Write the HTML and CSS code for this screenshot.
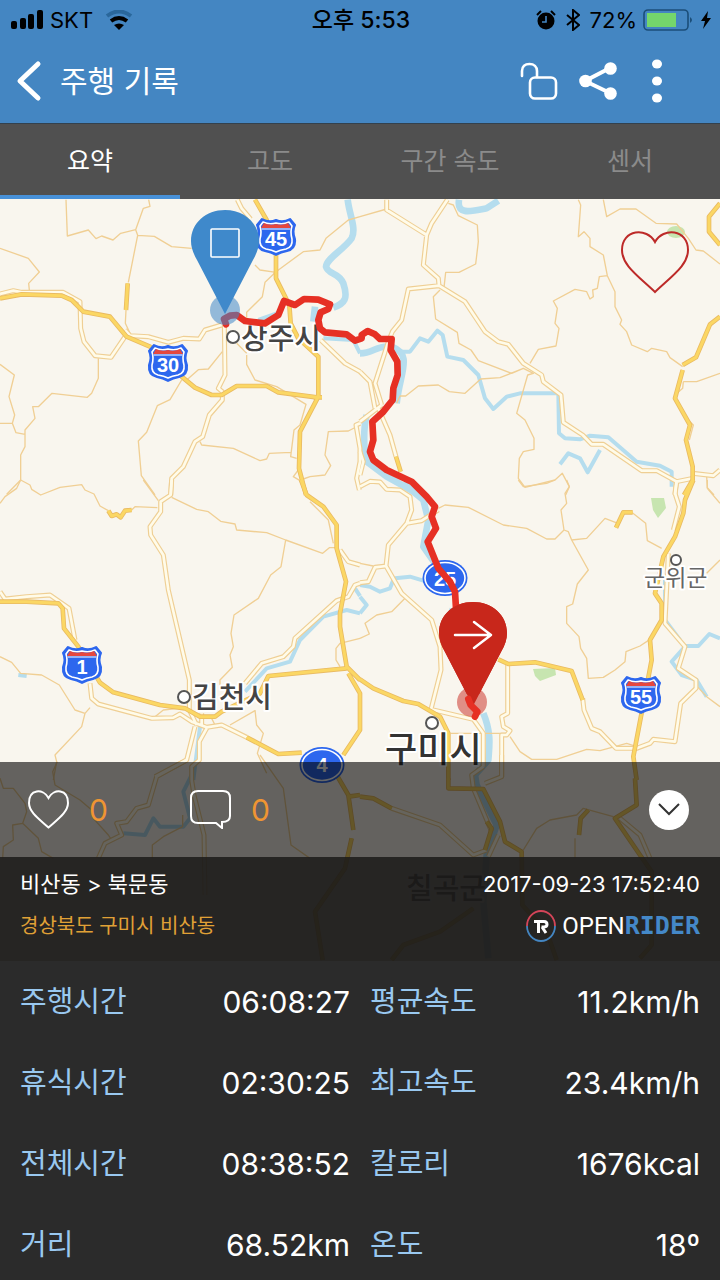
FILE: index.html
```html
<!DOCTYPE html>
<html lang="ko">
<head>
<meta charset="utf-8">
<meta name="viewport" content="width=device-width, initial-scale=1">
<title>주행 기록</title>
<link rel="stylesheet" href="styles.css">
</head>
<body>
<div class="app">
  <div class="status">
    <div class="status-side">
      <svg width="34" height="20" viewBox="0 0 34 20" aria-hidden="true"><rect x="1" y="11" width="6" height="8" rx="2"/><rect x="10" y="8" width="6" height="11" rx="2"/><rect x="18" y="4" width="6" height="15" rx="2"/><rect x="27" y="0" width="6" height="19" rx="2"/></svg>
      <span class="carrier">SKT</span>
      <svg width="28" height="20" viewBox="0 0 28 20" aria-hidden="true" fill="none"><path d="M2 6Q14-3 26 6" stroke="#2a679b" stroke-width="4"/><path d="M6 11Q14 5 22 11" stroke="#000" stroke-width="4"/><path d="M9 15Q14 12 19 15L14 20Z" fill="#000"/></svg>
    </div>
    <div class="clock">오후 5:53</div>
    <div class="status-side status-end">
      <svg width="20" height="20" viewBox="0 0 20 20" aria-hidden="true"><circle cx="10" cy="11" r="8.5"/><path d="M1 5L5 1M19 5L15 1" stroke="#000" stroke-width="2"/><path d="M10 6V12H6" fill="none" stroke="#4486c2" stroke-width="1.6"/></svg>
      <svg class="bluetooth" width="14" height="22" viewBox="0 0 14 22" aria-hidden="true"><path d="M1 6L13 16L7 21V1L13 6L1 16" fill="none" stroke="#000" stroke-width="2"/></svg>
      <span>72%</span>
      <svg width="51" height="22" viewBox="0 0 51 22" aria-hidden="true"><rect x="1" y="1" width="44" height="20" rx="4" fill="none" stroke="#1b4e79" stroke-width="1.6"/><rect x="4" y="4" width="29" height="14" fill="#74d66c"/><path d="M47 8Q51 11 47 14Z" fill="#1b4e79"/></svg>
      <svg width="12" height="18" viewBox="0 0 12 18" aria-hidden="true"><path d="M8 0L1 10H5L3 18L11 7H7Z"/></svg>
    </div>
  </div>

  <header class="header">
    <button class="back" aria-label="뒤로"><svg width="26" height="42" viewBox="0 0 26 42"><path d="M22 4L4 21L22 38" fill="none" stroke="#fff" stroke-width="5" stroke-linecap="round" stroke-linejoin="round"/></svg></button>
    <h1 class="title">주행 기록</h1>
    <button class="action" aria-label="잠금 해제"><svg width="38" height="38" viewBox="0 0 38 38" fill="none" stroke="#fff" stroke-width="2.6" stroke-linecap="round"><path d="M2 14V9C2 4 5 2 9.500 2C14 2 17 5 17 9V15"/><rect x="10" y="15.500" width="26" height="21" rx="5"/></svg></button>
    <button class="action" aria-label="공유"><svg width="38" height="38" viewBox="0 0 38 38" fill="#fff"><path d="M31 6L6 19L31 31" fill="none" stroke="#fff" stroke-width="4"/><circle cx="6.500" cy="19" r="6.300"/><circle cx="31.500" cy="6.500" r="6.300"/><circle cx="31.500" cy="31.500" r="6.300"/></svg></button>
    <button class="action" aria-label="더보기"><svg width="12" height="44" viewBox="0 0 12 44" fill="#fff"><ellipse cx="6" cy="5" rx="5" ry="4.500"/><ellipse cx="6" cy="22" rx="5" ry="4.500"/><ellipse cx="6" cy="39" rx="5" ry="4.500"/></svg></button>
  </header>

  <nav class="tabs">
    <button class="tab tab-active">요약</button>
    <button class="tab">고도</button>
    <button class="tab">구간 속도</button>
    <button class="tab">센서</button>
  </nav>

  <main class="map-panel">
    <svg class="map" viewBox="0 0 720 762" preserveAspectRatio="xMidYMin slice" role="img" aria-label="주행 경로 지도">
      <defs>
        <g id="main-roads">
          <g transform="translate(0 -4) scale(.33333)"><path d="M0 297L40 287L65 292H190L240 320L242 400L252 440L285 482L333 487L375 425M375 405L390 422L445 425L505 442L550 430L598 432L615 405L665 390M673 390L675 540L655 580L667 590V615L628 660L608 725L585 740L550 815L515 850L512 900M712 14L725 40L752 72M962 435L1035 505L1080 530M1080 685L1068 690L1080 760V800L1070 850L1078 885"/></g>
          <g transform="translate(360 -4) scale(.33333)"><path d="M80 14V45L200 120M262 14L215 85L200 120L190 210L235 250L237 272L145 282L125 375L97 410L85 440L45 565L65 630M237 272L315 320L375 410L415 440L445 448L490 505L545 540L550 560L603 600L610 682L668 720L695 748H730L845 827H890L950 860L998 850M0 530L30 560L45 640M0 680L65 630M55 640L90 720L108 785M998 835L1060 842L1080 825M950 860L945 900M0 770L10 800L0 840"/></g>
          <g transform="translate(0 281) scale(.33333)"><path d="M515 0L512 45L482 65V95L450 140L452 165L490 225L505 330L568 600V690L590 735M0 335L15 357L80 350L150 345L207 385L225 480M270 610L275 655L295 672L455 715L520 713L540 702L575 725L620 742L665 735L740 772M1080 310L1065 315L1045 350L1010 362L885 475L880 500L850 530L785 550L735 610M605 700V735M585 740L560 840L465 890M620 745L598 785V840L575 860V900M1020 210L1045 245L1080 255"/></g>
          <g transform="translate(360 281) scale(.33333)"><path d="M0 20L30 4L60 6L80 28L120 30L150 50L155 90L140 130L85 195L78 258L125 340L215 420L240 500L243 570L213 688L340 718L370 760V860M140 130L185 122L235 90M0 308L25 305L45 262L78 258M443 550V700L425 710L430 740L450 752L440 765H425V890M668 655L672 690L695 745L720 755L768 805H830L870 790L880 778L945 785L962 670L1008 625V600L955 565L975 500L915 430L925 220M950 0L945 40L958 80L940 150"/></g>
          <g transform="translate(0 556) scale(.33333)"><path d="M560 15L470 65L445 150L410 160L380 200L350 205L365 240L315 265L295 310M575 75L582 120L612 240L615 420"/></g>
          <g transform="translate(360 556) scale(.33333)"><path d="M95 160L240 210L340 300L380 285M425 0V65L375 85M370 35L335 60L340 100L395 230M780 190L840 240L870 310M415 240L385 305"/></g>
        </g>
        <g id="highways">
          <g transform="translate(0 -4) scale(.33333)"><path d="M0 310L65 298L185 302L215 315L250 350L330 365L380 425L450 455L545 545L585 578L635 600H665L710 573H800L835 592L950 607M765 14L800 75L828 180V250L868 330L872 385L895 430L955 485V605L900 710L897 820L918 900M383 265L378 345M940 607H966"/></g>
          <g transform="translate(360 -4) scale(.33333)"><path d="M1080 25L1047 65V110L1080 150M1080 365L1050 388L1008 487L968 510M968 525L945 610L990 690L978 735L998 815V855L972 900M108 785L122 830"/></g>
          <g transform="translate(0 281) scale(.33333)"><path d="M903 0L920 45L970 80L1010 135V205L1038 305L1020 400V440L1040 560L1080 600M0 365H80L175 370L188 385L192 445L235 500L300 608L340 637L480 675L555 685L600 710H645L665 695L780 640L805 588L1040 565M740 772L835 822L905 818M1045 580L1080 640V750L1030 825M325 92L335 108L350 103L362 112L375 92L395 90"/></g>
          <g transform="translate(360 281) scale(.33333)"><path d="M1000 0L975 60L970 100L945 170L910 230L885 340L905 370V420L870 480L875 540L820 830L830 900M415 538L445 552L525 547L635 573L668 660M0 598L40 625L130 663L175 672L240 710L265 760V900M768 143L790 97H818"/></g>
          <g transform="translate(0 556) scale(.33333)"><path d="M1010 60L1045 120L1060 225M1080 120L1045 125M1055 250L1035 340L945 470L968 615"/></g>
          <g transform="translate(360 556) scale(.33333)"><path d="M0 125L40 130L95 160M265 70V100L370 102L420 200L435 260L485 290L487 450L560 530L590 615M825 70L830 150L765 190L840 300L875 350V570L840 610M685 165L662 190L657 240M340 460L240 530L130 570L95 615M380 200L395 220L375 285"/></g>
        </g>
        <g id="interstate">
          <path d="M-14-18Q-7-14 0-17Q7-14 14-18L19-12Q16-6 19 2Q20 12 11 14Q5 15 0 18Q-5 15-11 14Q-20 12-19 2Q-16-6-19-12Z" fill="#2d67ee" stroke="#2d67ee" stroke-width="2"/>
          <path d="M-13-15Q-7-12 0-14Q7-12 13-15L16-11Q14-5 16 2Q17 10 10 12Q4 13 0 15Q-4 13-10 12Q-17 10-16 2Q-14-5-16-11Z" fill="#2d67ee" stroke="#fff" stroke-width="1.600"/>
          <path d="M-15-9L-12-14Q-6-11 0-13Q6-11 12-14L15-9Z" fill="#e5473f"/>
          <path d="M-14-8H14" stroke="#fff" stroke-width="1"/>
        </g>
        <g id="oval">
          <ellipse rx="22.500" ry="18" fill="#2d67ee"/><ellipse rx="20" ry="15.500" fill="#2d67ee" stroke="#fff" stroke-width="1.600"/>
        </g>
        <path id="pin" d="M225 115L197 61C193 54 191 48 191 42C191 24 206 11 225 11C244 11 259 24 259 42C259 48 257 54 253 61Z"/>
      </defs>

      <rect class="land" width="720" height="762"/>

      <g class="parks">
        <ellipse cx="676" cy="33" rx="9" ry="6"/>
        <path d="M651 299H664L666 309L658 319L653 311ZM533 470L555 469L556 476L540 482L535 477Z"/>
      </g>

      <g class="rivers">
        <g transform="translate(0 -4) scale(.33333)"><path class="wide" d="M1043 14C1048 60 1070 100 1055 130C1030 165 980 190 978 215C985 240 1015 230 1030 265C1045 310 1035 325 1000 338M945 335L940 380"/><path d="M775 375L830 355M970 430L1060 435L1080 475"/></g>
        <g transform="translate(360 -4) scale(.33333)"><path class="wide" d="M297 14C290 60 330 50 380 40L415 17M0 475C40 475 50 450 90 455M95 455C160 480 120 530 110 625M20 660C10 700 10 760 20 800L80 845L180 900"/><path d="M120 470H150L180 430L205 440L232 407L248 420L262 485L310 495L355 540L375 610L400 642L440 605L480 595H595L597 715L615 730L660 733L690 722L745 727L830 800L900 812L935 830V875M600 808L625 775L660 790L683 832L720 765"/></g>
        <g transform="translate(0 281) scale(.33333)"><path d="M735 635L800 565L870 545L900 480L970 410L1040 390L1080 400M600 740L580 900M55 585L80 588M1065 325L1080 348"/></g>
        <g transform="translate(360 281) scale(.33333)"><path class="wide" d="M130 10L190 60L205 120L190 200L225 250M370 700C395 760 388 800 385 840L340 890"/><path d="M105 295L150 290L200 305M0 315L30 320L60 335L90 325L100 300M0 350L20 375L0 400M275 385L270 400M975 498H1015L1048 462L1080 475M975 500L935 545L965 585L1010 600L1040 650M915 300V420L960 480"/></g>
        <g transform="translate(0 556) scale(.33333)"><path d="M575 60L550 110L570 190L550 215H480L460 190L435 240L370 235"/></g>
        <g transform="translate(360 556) scale(.33333)"><path class="wide" d="M345 60L350 90L410 210L380 300L370 440L385 610"/></g>
      </g>

      <g class="local-roads">
        <g transform="translate(0 -4) scale(.33333)"><path d="M198 14L202 123L265 105L288 131L305 123L339 135L362 115L407 104L430 40L450 34L446 14M407 104L413 121L463 124L515 155L575 160M413 121L385 262M378 345L376 385L390 415M0 160L85 190L118 231L86 265L88 285M0 508L43 540L27 605L44 660L37 685H0M37 685L48 713L75 718M295 490V550L275 595L262 607L156 595L115 635H98L105 670L75 705V755L62 780V855L20 898M545 555L510 614L472 632L440 712L415 738L424 842L465 900M560 555L595 524L625 522L667 470M600 740L605 750L700 760L780 797L800 792L808 775L872 772M740 480V508L765 555L830 575L918 628L900 690L882 705L872 785L890 790M1080 65L1045 75L978 130L960 165L910 170L828 230L795 262L787 305L740 352V372M765 210L780 225L828 232M710 445L740 475M1080 690L1045 708L985 710L975 780L992 812L975 840L930 845L910 852M895 825L880 845L905 860"/></g>
        <g transform="translate(360 -4) scale(.33333)"><path d="M0 65L80 42M265 25L280 30L295 62L352 90L355 140L347 207L297 232H257L252 278M240 285L220 305L227 372L292 412L297 445L333 465L355 497L455 535L490 520M110 625L120 603H137L175 573L235 570L268 590L315 595L362 552L420 548L490 520L520 535L503 540L470 655L495 675L522 730V763L490 770L478 790L475 850L495 877L585 855L607 835L628 875L617 900M510 505L535 463L588 453L597 400L585 385L592 340L580 318L645 283L680 290L690 312L700 305L698 285L712 280L718 245L742 242M655 14L662 30L655 125L672 110L690 130V155L730 180L742 242L765 290V335L785 375L780 388L800 410L815 450L862 470L875 460L920 470L930 488L968 515M730 14L740 65L780 42H828L888 85L950 87L985 130L1008 165L1030 168L1080 207M970 560H1010L1080 535M1040 845L1042 878L1062 900M980 670L1000 690L988 735M970 560L968 580L945 600"/></g>
        <g transform="translate(0 281) scale(.33333)"><path d="M0 70L15 50L50 25L62 0L90 15L95 28L122 45L180 22L245 14L255 30L282 42L300 78L325 92M395 90L405 80L472 83M430 0L475 62M515 52L590 88L625 95L662 124L705 132L710 150L800 158L857 180L968 220L988 203H1010M857 180L843 260L812 285L775 355L702 405L693 460L700 500L690 525L697 562L660 600V625M0 530L35 547L62 580L125 585L178 615L225 690L255 700L270 683M255 700L245 740L165 825L170 845L160 900M1080 475L1020 490L1008 505V540L1020 560M765 690L770 735L790 760L772 820L800 880M690 735L765 692M930 65L985 120L1000 190M465 710L490 690L535 685M635 715L645 735"/></g>
        <g transform="translate(360 281) scale(.33333)"><path d="M235 85L255 75L325 82L430 135L500 145L560 177H585L612 150L603 90L620 70L615 40L628 20L620 0M475 0L490 20L560 10L585 0M612 150L625 155L635 180L685 270L652 312L638 372L620 380V430L657 470L662 505L680 535L685 595L730 592L765 570L795 545L798 515L840 498L870 478M635 180L680 175L735 115L768 128M815 97L857 130L862 182L905 205M0 250L40 258M0 475L28 462L15 430L50 405L95 395L135 355M1042 0V25L1080 70M1080 240L1040 280M450 770L480 815L515 838H590L680 808L720 812L800 790L830 800M272 760H440M1012 620L1040 650L1080 680"/></g>
        <g transform="translate(0 556) scale(.33333)"><path d="M172 20L158 50L165 90L240 135L275 165L280 190L325 240L335 255M0 70L10 100H40L75 145L80 170L68 205L115 250L125 290L160 310M68 205L38 210L40 255L10 275L8 310M780 0L850 100L873 270L930 310M548 180V215L490 245L457 270V310"/></g>
        <g transform="translate(360 556) scale(.33333)"><path d="M490 285L530 220L570 195L650 180L670 160L760 185M645 250V310"/></g>
      </g>

      <use href="#main-roads" class="main-casing"/>
      <use href="#main-roads" class="main-fill"/>
      <use href="#highways" class="highway-casing"/>
      <use href="#highways" class="highway-fill"/>

      <g class="shields">
        <use href="#interstate" x="276" y="38"/><text x="276" y="47">45</text>
        <use href="#interstate" x="168" y="164"/><text x="168" y="173">30</text>
        <use href="#interstate" x="82" y="466"/><text x="82" y="475">1</text>
        <use href="#interstate" x="641" y="496"/><text x="641" y="505">55</text>
        <use href="#oval" x="445" y="379"/><text x="445" y="387">25</text>
        <use href="#oval" x="322" y="566"/><text x="322" y="573">4</text>
      </g>

      <g class="towns">
        <circle cx="233" cy="138" r="6"/><circle cx="184" cy="498" r="6"/><circle cx="432" cy="524" r="6"/><circle cx="676" cy="361" r="5"/>
      </g>
      <g class="places">
        <text class="city" x="241" y="150">상주시</text>
        <text class="city" x="192" y="509">김천시</text>
        <text class="city" x="406" y="700">칠곡군</text>
        <text class="metro" x="385" y="563">구미시</text>
        <text class="county" x="644" y="387">군위군</text>
      </g>

      <circle cx="472" cy="503" r="15" fill="#c8261c" opacity=".5"/>
      <use href="#pin" x="248" y="392" fill="#c8271b"/>
      <g transform="translate(0 -4) scale(.33333)" class="route">
        <path d="M678 388L672 372L690 362L710 360L735 378L795 385L835 360L852 318L885 330L912 312L955 314L990 328L985 342L962 352L955 375L960 400L975 412L1040 418L1065 437L1085 430L1085 420L1103 408L1125 418L1140 432L1175 432L1172 465L1192 500L1193 540L1180 580L1178 615L1150 650L1117 680L1120 735L1110 770L1120 795L1160 825L1235 860L1280 905L1305 935L1295 965L1308 1000L1283 1040L1315 1120L1350 1160L1365 1190L1368 1240M1405 1512L1412 1530L1432 1550L1425 1565"/>
      </g>
      <use href="#pin" x="248" y="392" fill="#c8271b" clip-path="inset(0 0 12px 0)"/>
      <circle cx="225" cy="111" r="15" fill="#3f87c8" opacity=".55"/>
      <use href="#pin" fill="#3f89cb"/>
      <rect x="211" y="30" width="28" height="28" rx="1" fill="none" stroke="#fff" stroke-width="1.600"/>
      <path d="M455 436H491M474 423L491 436L474 449" fill="none" stroke="#fff" stroke-width="2.500" stroke-linecap="round"/>
    </svg>

    <button class="favorite" aria-label="즐겨찾기"><svg width="68" height="64" viewBox="0 0 68 64"><path d="M34 12C26-3 1-1 1 20C1 35 16 45 34 62C52 45 67 35 67 20C67-1 42-3 34 12Z" fill="none" stroke="#bd2a28" stroke-width="2"/></svg></button>

    <div class="social">
      <button class="reaction" aria-label="좋아요 0"><svg width="41" height="39" viewBox="0 0 41 39"><path d="M20.500 8C15-2 1-1 1 13C1 22 11 29 20.500 37.500C30 29 40 22 40 13C40-1 26-2 20.500 8Z" fill="none" stroke="#fff" stroke-width="2"/></svg><span>0</span></button>
      <button class="reaction" aria-label="댓글 0"><svg width="41" height="39" viewBox="0 0 41 39"><path d="M8 1H33Q40 1 40 8V26Q40 32 32 32V38L26 33H8Q1 33 1 26V8Q1 1 8 1Z" fill="none" stroke="#fff" stroke-width="2"/></svg><span>0</span></button>
      <button class="collapse" aria-label="접기"><svg width="22" height="13" viewBox="0 0 22 13"><path d="M1 1L11 11L21 1" fill="none" stroke="#333" stroke-width="2"/></svg></button>
    </div>

    <section class="ride">
      <div class="ride-line"><h2 class="ride-name">비산동 &gt; 북문동</h2><time class="ride-time">2017-09-23 17:52:40</time></div>
      <div class="ride-line">
        <span class="ride-place">경상북도 구미시 비산동</span>
        <div class="brand">
          <svg width="30" height="32" viewBox="0 0 30 32" aria-hidden="true" fill="none" stroke-width="1.800"><path d="M1 16A14 15 0 0 1 29 16" stroke="#d54559"/><path d="M29 16A14 15 0 0 1 1 16" stroke="#4486c2"/><path d="M8 11.500H18Q21 11.500 21 14.500Q21 17 17.500 17H15.500M12.500 11V23M16 17L20 23" stroke="#fff" stroke-width="3"/></svg>
          <span class="brand-name"><span class="brand-open">OPEN</span><span class="brand-rider">RIDER</span></span>
        </div>
      </div>
    </section>
  </main>

  <dl class="stats">
    <div class="stat"><dt>주행시간</dt><dd>06:08:27</dd></div>
    <div class="stat"><dt>평균속도</dt><dd>11.2km/h</dd></div>
    <div class="stat"><dt>휴식시간</dt><dd>02:30:25</dd></div>
    <div class="stat"><dt>최고속도</dt><dd>23.4km/h</dd></div>
    <div class="stat"><dt>전체시간</dt><dd>08:38:52</dd></div>
    <div class="stat"><dt>칼로리</dt><dd>1676kcal</dd></div>
    <div class="stat"><dt>거리</dt><dd>68.52km</dd></div>
    <div class="stat"><dt>온도</dt><dd>18º</dd></div>
  </dl>
</div>
</body>
</html>
```
FILE: styles.css
```css
* { box-sizing: border-box; }

body {
  margin: 0;
  background: #2b2b2b;
  color: #fff;
  font-family: Inter, "Noto Sans CJK KR", sans-serif;
}

h1, h2, dl, dd { margin: 0; font-weight: 400; }

button {
  display: flex;
  align-items: center;
  justify-content: center;
  padding: 0;
  border: 0;
  background: none;
  color: inherit;
  font: inherit;
  cursor: pointer;
}

svg { display: block; flex: none; }

.app {
  display: flex;
  flex-direction: column;
  min-height: 100vh;
}

.status {
  display: grid;
  grid-template-columns: 1fr auto 1fr;
  align-items: center;
  height: 40px;
  padding: 0 8px 0 10px;
  background: #4486c2;
  color: #000;
  font-size: 22px;
  line-height: 28px;
}
.status-side { display: flex; align-items: center; gap: 6px; }
.status-end { justify-content: flex-end; }
.bluetooth { margin: 0 4px; }
.carrier { margin-right: 6px; }
.clock { font-size: 23px; font-weight: 500; }

.header {
  display: flex;
  align-items: center;
  height: 84px;
  padding: 0 34px 2px 16px;
  border-bottom: 1px solid #33414d;
  background: #4486c2;
}
.back { margin-right: 18px; }
.title {
  flex: 1;
  font-size: 30px;
  line-height: 40px;
}
.action { width: 59px; height: 59px; }

.tabs {
  display: grid;
  grid-template-columns: repeat(4, 1fr);
  height: 75px;
  background: #505050;
}
.tab {
  padding-top: 2px;
  border-bottom: 4px solid transparent;
  color: #8b8b8b;
  font-size: 25px;
  line-height: 32px;
}
.tab-active { border-color: #4891d8; color: #fff; }

.map-panel {
  position: relative;
  display: flex;
  flex: 1;
  flex-direction: column;
  justify-content: flex-end;
  min-height: 480px;
  background: #f9f6ee;
}
.map {
  position: absolute;
  inset: 0;
  width: 100%;
  height: 100%;
  stroke-linejoin: round;
}
.land { fill: #f9f6ee; }
.parks { fill: #c7e5b0; }
.rivers { fill: none; stroke: #b5ddee; stroke-width: 12; }
.rivers .wide { stroke-width: 20; }
.local-roads { fill: none; stroke: #f0cf94; stroke-width: 4; }
.main-casing { fill: none; stroke: #efcf94; stroke-width: 15; }
.main-fill { fill: none; stroke: #fffbe9; stroke-width: 8; }
.highway-casing { fill: none; stroke: #e9ba62; stroke-width: 14; }
.highway-fill { fill: none; stroke: #fbd764; stroke-width: 9; }
.shields text {
  fill: #fff;
  font-family: "Liberation Sans", sans-serif;
  font-size: 20px;
  font-weight: 700;
  text-anchor: middle;
}
.towns { fill: #fff; stroke: #555; stroke-width: 2; }
.places {
  fill: #444;
  stroke: #fff;
  stroke-width: 4;
  paint-order: stroke;
  font-family: "Noto Sans CJK KR", sans-serif;
}
.city { font-size: 29px; font-weight: 500; }
.metro { font-size: 35px; font-weight: 500; fill: #333; }
.county { font-size: 23px; fill: #666; }
.route {
  fill: none;
  stroke: #e63024;
  stroke-width: 20;
  stroke-linecap: round;
}

.favorite {
  position: absolute;
  top: 31px;
  right: 31px;
}

.social {
  position: relative;
  display: flex;
  align-items: center;
  gap: 82px;
  height: 95px;
  padding: 0 31px 0 28px;
  background: rgba(0, 0, 0, 0.6);
}
.reaction {
  gap: 20px;
  color: #ef9532;
  font-size: 30px;
  line-height: 40px;
}
.collapse {
  width: 40px;
  height: 40px;
  margin-left: auto;
  border-radius: 50%;
  background: #fff;
}

.ride {
  position: relative;
  display: flex;
  flex-direction: column;
  gap: 8px;
  padding: 10px 20px 18px;
  background: rgba(24, 23, 22, 0.94);
}
.ride-line {
  display: flex;
  align-items: center;
  justify-content: space-between;
  height: 34px;
  font-size: 22px;
  line-height: 34px;
}
.ride-name { font-size: 22px; }
.ride-place { color: #e0a136; font-size: 20px; }
.brand { display: flex; align-items: center; gap: 6px; }
.brand-name { display: flex; align-items: baseline; }
.brand-open { font-family: Roboto, sans-serif; font-size: 24px; }
.brand-rider {
  color: #4488c8;
  font-family: "DejaVu Sans Mono", monospace;
  font-size: 25px;
  font-weight: 700;
}

.stats {
  display: grid;
  grid-template-columns: 1fr 1fr;
  gap: 45px 20px;
  padding: 23px 20px 17px;
  background: #2b2b2b;
}
.stat {
  display: flex;
  align-items: center;
  justify-content: space-between;
  height: 36px;
  line-height: 36px;
}
.stat dt { color: #99c8f0; font-size: 29px; }
.stat dd { font-size: 30px; }
```
